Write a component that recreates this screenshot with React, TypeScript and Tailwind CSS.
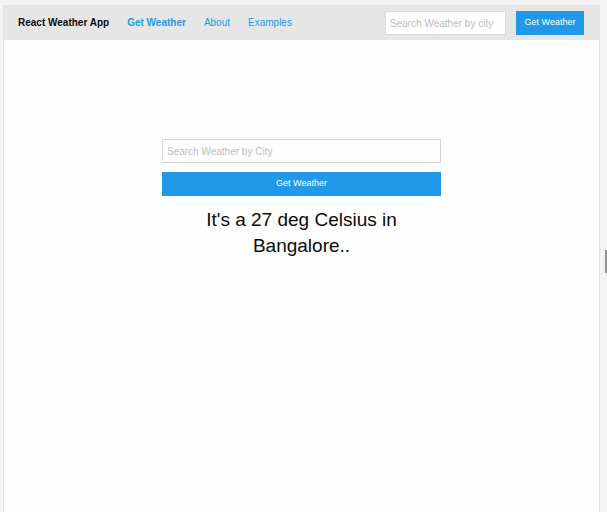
import { useState } from "react";

const links = [
  { label: "Get Weather", active: true },
  { label: "About", active: false },
  { label: "Examples", active: false },
];

function TopBar() {
  return (
    <header className="flex h-[34px] items-center justify-between bg-[#e6e6e6] pr-[15px] pl-[14px]">
      <nav className="flex items-center gap-[18px] text-[10px] leading-4">
        <span className="font-bold">React Weather App</span>
        {links.map((link) => (
          <a
            key={link.label}
            href="#"
            className={link.active ? "font-bold text-[#2199e8]" : "text-[#2199e8]"}
          >
            {link.label}
          </a>
        ))}
      </nav>
      <form className="flex items-center gap-[10px]" onSubmit={(e) => e.preventDefault()}>
        <input
          type="text"
          aria-label="Search weather by city"
          placeholder="Search Weather by city"
          className="h-6 w-[121px] border border-[#dadada] bg-[#fefefe] px-1 text-[10px] outline-none placeholder:text-[#bdbdbd]"
        />
        <button type="submit" className="h-6 w-[68px] bg-[#2199e8] text-[9px] text-white">
          Get Weather
        </button>
      </form>
    </header>
  );
}

export default function App() {
  const [city, setCity] = useState("");

  return (
    <div className="min-h-screen bg-[#f3f3f3] pt-[5px] pr-[7px] pl-[3px] font-['Liberation_Sans',Arial,sans-serif] text-[#0a0a0a]">
      <div className="min-h-[calc(100vh-5px)] border-x border-t border-[#e4e4e4] bg-[#fefefe]">
        <TopBar />
        <main className="mx-auto w-[279px] pt-[99px]">
          <form className="flex flex-col gap-[9px]" onSubmit={(e) => e.preventDefault()}>
            <input
              type="text"
              aria-label="City"
              placeholder="Search Weather by City"
              value={city}
              onChange={(e) => setCity(e.target.value)}
              className="h-6 w-full border border-[#d4d4d4] bg-[#fefefe] px-1 text-[10px] outline-none placeholder:text-[#bdbdbd]"
            />
            <button type="submit" className="h-6 w-full bg-[#2199e8] text-[9px] text-white">
              Get Weather
            </button>
          </form>
          <h3 className="mt-[11px] text-center text-[19px] leading-[26px]">
            It's a 27 deg Celsius in Bangalore..
          </h3>
        </main>
      </div>
      <div className="fixed top-[250px] right-0 h-[23px] w-[2px] bg-[#929292]" />
    </div>
  );
}
